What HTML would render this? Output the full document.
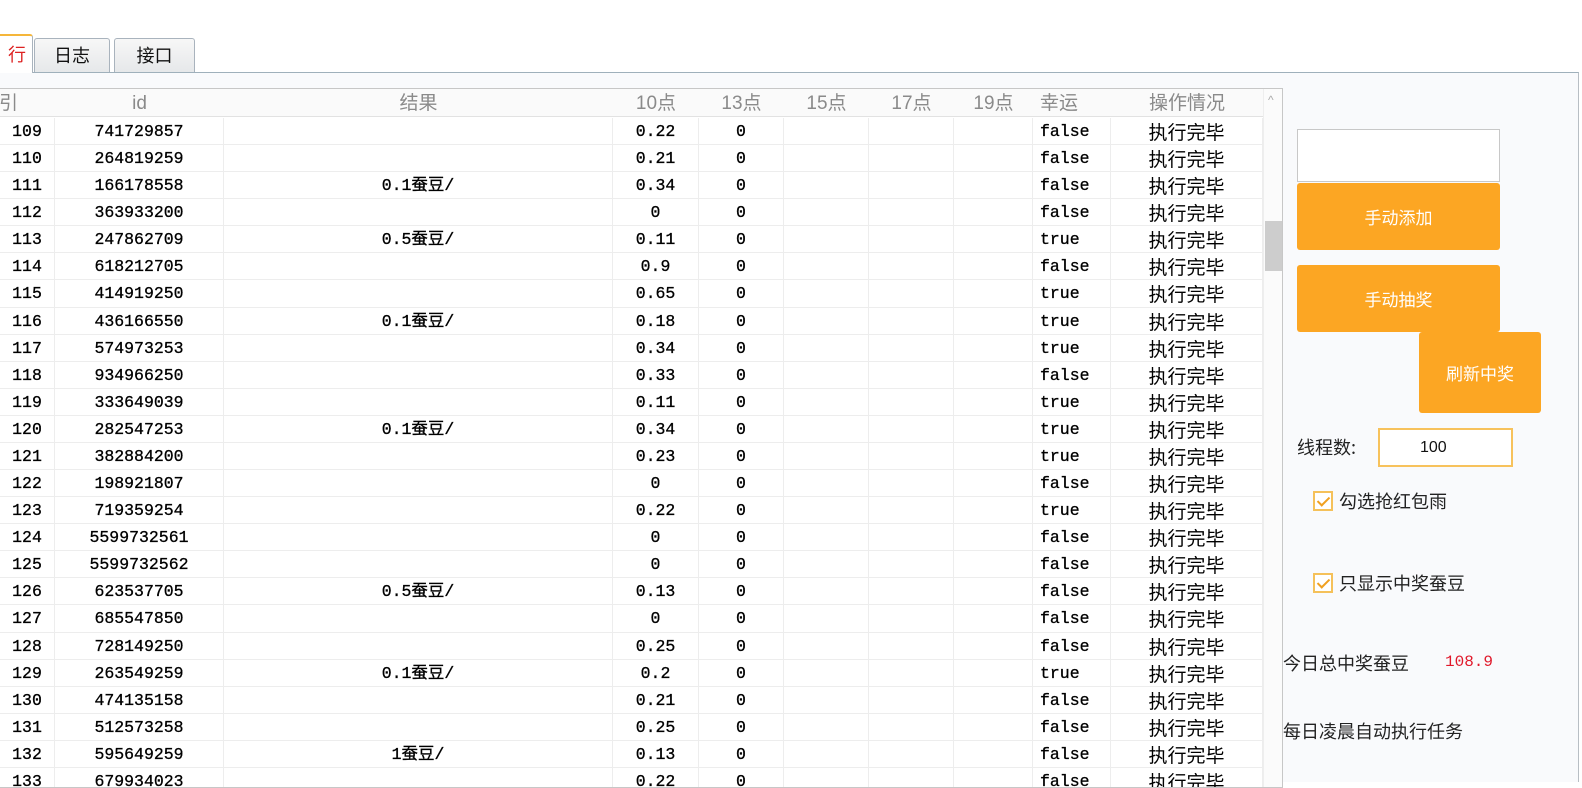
<!DOCTYPE html>
<html><head><meta charset="utf-8"><style>
*{margin:0;padding:0;box-sizing:border-box}
body{width:1582px;height:778px;overflow:hidden;background:#fff;position:relative;font-family:"Liberation Sans","Noto Sans CJK SC",sans-serif}
.abs{position:absolute}
.tab{position:absolute;top:38px;height:34px;border:1px solid #a9b3bd;border-bottom:none;border-radius:3px 3px 0 0;background:linear-gradient(#f7f7f7,#e6e8ea);font-size:18px;color:#111;text-align:center;line-height:34px}
.panel{position:absolute;left:0;top:72px;width:1579px;height:710px;border-top:1px solid #9fb0bb;border-right:1px solid #b8bec4;background:#f9fafc}
.grid{position:absolute;left:0;top:88px;width:1283px;height:700px;border:1px solid #c7c7c7;border-left:none;background:#fff;overflow:hidden}
.hdr{position:absolute;top:0;left:0;height:28px;width:1263px;background:#fafafa;border-bottom:1px solid #e2e2e2}
.hdr div{position:absolute;top:0;height:28px;line-height:30px;text-align:center;color:#8a8a8a;font-size:19px;font-family:"Liberation Sans","Noto Sans CJK SC",sans-serif}
.row{position:absolute;left:0;width:1263px;height:27.08px;border-bottom:1px solid #ededed}
.row div{position:absolute;top:0;height:27px;line-height:27px;text-align:center;color:#000;font-size:16.5px;font-family:"Liberation Mono","Noto Sans CJK SC",monospace;border-right:1px solid #ededed;-webkit-text-stroke:0.3px #000}
.row .cn{font-family:"WenQuanYi Zen Hei","Noto Sans CJK SC",sans-serif;font-size:19px;-webkit-text-stroke:0}
.c0{left:0;width:55px}.c1{left:55px;width:169px}.c2{left:224px;width:389px}.c3{left:613px;width:86px}.c4{left:699px;width:85px}.c5{left:784px;width:85px}.c6{left:869px;width:85px}.c7{left:954px;width:79px}.c8{left:1033px;width:78px;text-align:left!important;padding-left:7px}.c9{left:1111px;width:152px}
.btn{position:absolute;background:#fca623;color:#fff;font-size:17px;text-align:center;border-radius:3px;font-family:"Noto Sans CJK SC",sans-serif}
.lbl{position:absolute;font-size:18px;color:#222;font-family:"Noto Sans CJK SC",sans-serif;white-space:nowrap}
.cb{position:absolute;width:20px;height:20px;border:2px solid #f5c15a;background:#fff}
.cb:after{content:"";position:absolute;left:5px;top:1px;width:5px;height:10px;border:solid #f0a020;border-width:0 2px 2px 0;transform:rotate(45deg)}
</style></head><body>
<div class="panel"></div>
<div class="tab" style="left:-14px;top:34px;height:39px;width:47px;background:#fff;border-top:2px solid #f5b63a;color:#d22;text-align:right;padding-right:6px;line-height:38px;z-index:2;overflow:hidden">行</div>
<div class="tab" style="left:34px;width:76px">日志</div>
<div class="tab" style="left:114px;width:81px">接口</div>
<div class="grid">
<div class="hdr">
<div class="c0" style="text-align:left;left:-20px;width:60px">索引</div><div class="c1">id</div><div class="c2">结果</div><div class="c3">10点</div><div class="c4">13点</div><div class="c5">15点</div><div class="c6">17点</div><div class="c7">19点</div><div class="c8" style="text-align:left;padding-left:7px">幸运</div><div class="c9">操作情况</div>
</div>
<div id="rows"></div>
<div class="abs" style="left:1263px;top:0;width:19px;height:700px;background:#fbfbfb;border-left:1px solid #eee"></div>
<div class="abs" style="left:1268px;top:4px;color:#aaa;font-size:12px">^</div>
<div class="abs" style="left:1265px;top:132px;width:17px;height:50px;background:#cdcdcd"></div>
</div>
<div class="abs" style="left:1297px;top:129px;width:203px;height:53px;background:#fff;border:1px solid #c8c8c8"></div>
<div class="btn" style="left:1297px;top:183px;width:203px;height:67px;line-height:67px">手动添加</div>
<div class="btn" style="left:1297px;top:265px;width:203px;height:67px;line-height:67px">手动抽奖</div>
<div class="btn" style="left:1419px;top:332px;width:122px;height:81px;line-height:81px">刷新中奖</div>
<div class="lbl" style="left:1297px;top:434px">线程数:</div>
<div class="abs" style="left:1378px;top:428px;width:135px;height:39px;border:2px solid #f7c25c;background:#fff;font-family:'Liberation Sans',sans-serif;font-size:16px;line-height:35px;padding-left:40px;color:#111">100</div>
<div class="cb" style="left:1313px;top:491px"></div>
<div class="lbl" style="left:1339px;top:488px">勾选抢红包雨</div>
<div class="cb" style="left:1313px;top:573px"></div>
<div class="lbl" style="left:1339px;top:570px">只显示中奖蚕豆</div>
<div class="lbl" style="left:1283px;top:650px">今日总中奖蚕豆</div>
<div class="abs" style="left:1445px;top:653px;color:#e0182a;font-family:'Liberation Mono',monospace;font-size:16px">108.9</div>
<div class="lbl" style="left:1283px;top:718px">每日凌晨自动执行任务</div>
<script>
var d=[["109","741729857","","0.22","false"],["110","264819259","","0.21","false"],["111","166178558","0.1蚕豆/","0.34","false"],["112","363933200","","0","false"],["113","247862709","0.5蚕豆/","0.11","true"],["114","618212705","","0.9","false"],["115","414919250","","0.65","true"],["116","436166550","0.1蚕豆/","0.18","true"],["117","574973253","","0.34","true"],["118","934966250","","0.33","false"],["119","333649039","","0.11","true"],["120","282547253","0.1蚕豆/","0.34","true"],["121","382884200","","0.23","true"],["122","198921807","","0","false"],["123","719359254","","0.22","true"],["124","5599732561","","0","false"],["125","5599732562","","0","false"],["126","623537705","0.5蚕豆/","0.13","false"],["127","685547850","","0","false"],["128","728149250","","0.25","false"],["129","263549259","0.1蚕豆/","0.2","true"],["130","474135158","","0.21","false"],["131","512573258","","0.25","false"],["132","595649259","1蚕豆/","0.13","false"],["133","679934023","","0.22","false"]];
var h="";d.forEach(function(r,i){h+='<div class="row" style="top:'+(29+i*27.08)+'px"><div class="c0">'+r[0]+'</div><div class="c1">'+r[1]+'</div><div class="c2">'+r[2]+'</div><div class="c3">'+r[3]+'</div><div class="c4">0</div><div class="c5"></div><div class="c6"></div><div class="c7"></div><div class="c8">'+r[4]+'</div><div class="c9 cn">执行完毕</div></div>';});
document.getElementById("rows").innerHTML=h;
</script>
</body></html>
